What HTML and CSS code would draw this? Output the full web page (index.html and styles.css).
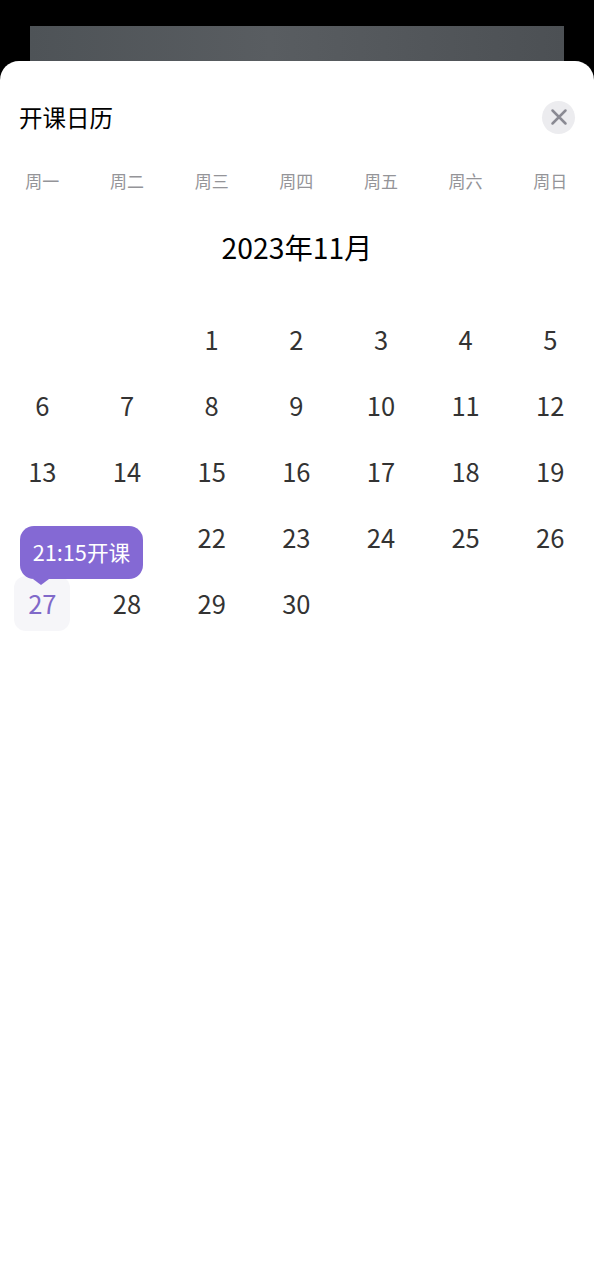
FILE: index.html
```html
<!DOCTYPE html>
<html lang="zh-CN">
<head>
<meta charset="utf-8">
<title>开课日历</title>
<link rel="stylesheet" href="styles.css">
</head>
<body>
<div class="backdrop"><div class="behind"></div></div>
<section class="sheet">
  <header class="head">
    <h1 class="title">开课日历</h1>
    <button class="close" aria-label="关闭">
      <svg viewBox="0 0 20 20" width="20" height="20"><path d="M3.5 3.5L16.5 16.5M16.5 3.5L3.5 16.5" fill="none" stroke="#8a8a93" stroke-width="2.5" stroke-linecap="round"/></svg>
    </button>
  </header>
  <div class="week">
    <span>周一</span><span>周二</span><span>周三</span><span>周四</span><span>周五</span><span>周六</span><span>周日</span>
  </div>
  <h2 class="month">2023年11月</h2>
  <div class="days">
    <span></span><span></span><span>1</span><span>2</span><span>3</span><span>4</span><span>5</span>
    <span>6</span><span>7</span><span>8</span><span>9</span><span>10</span><span>11</span><span>12</span>
    <span>13</span><span>14</span><span>15</span><span>16</span><span>17</span><span>18</span><span>19</span>
    <span></span><span></span><span>22</span><span>23</span><span>24</span><span>25</span><span>26</span>
    <span class="today"><i class="mark">27</i><b class="tip">21:15开课</b></span><span>28</span><span>29</span><span>30</span>
  </div>
</section>
</body>
</html>
```
FILE: styles.css
```css
* { box-sizing: border-box; }
html, body { margin: 0; height: 100%; }
body {
  background: #000;
  font-family: "Noto Sans CJK SC", "Noto Sans", sans-serif;
  display: flex;
  flex-direction: column;
  height: 1280px;
  overflow: hidden;
}
.backdrop { height: 61px; padding: 26px 30px 0; flex: none; }
.behind {
  height: 35px;
  background: linear-gradient(90deg, #4e5357, #595d61 45%, #4c5054);
}
.sheet {
  flex: 1;
  background: #fff;
  border-radius: 19px 19px 0 0;
}
.head {
  display: flex;
  justify-content: space-between;
  align-items: center;
  padding: 39px 19px 0 19px;
  height: 73px;
}
.title { margin: 0; font-size: 23.5px; font-weight: 400; color: #000; line-height: 34px; }
.close {
  width: 33px; height: 33px;
  border: 0; padding: 0;
  border-radius: 50%;
  background: #ececef;
  display: flex; align-items: center; justify-content: center;
}
.week, .days {
  display: grid;
  grid-template-columns: repeat(7, 84.67px);
  text-align: center;
}
.week {
  margin-top: 34px;
  font-size: 17px;
  line-height: 25px;
  color: #949498;
}
.month {
  margin: 34px 0 0;
  text-align: center;
  font-size: 28.3px;
  font-weight: 400;
  line-height: 40px;
  color: #000;
}
.days {
  margin-top: 38px;
  grid-auto-rows: 66px;
  font-size: 25.5px;
  font-weight: 400;
  color: #333;
}
.days span { display: flex; align-items: center; justify-content: center; }
.today { position: relative; }
.mark {
  font-style: normal;
  width: 56px; height: 55px;
  margin-top: 2px;
  padding-bottom: 2px;
  display: flex; align-items: center; justify-content: center;
  background: #f6f6f9;
  border-radius: 12px;
  color: #8069c9;
}
.tip {
  position: absolute;
  left: 20px; top: -43px;
  width: 123px; height: 53px;
  padding-bottom: 3px;
  display: flex; align-items: center; justify-content: center;
  background: #8469d4;
  border-radius: 14px;
  color: #fff;
  font-size: 21.7px;
  font-weight: 400;
  white-space: nowrap;
}
.tip::after {
  content: "";
  position: absolute;
  left: 13px; bottom: -6px;
  border-left: 8px solid transparent;
  border-right: 8px solid transparent;
  border-top: 6px solid #8469d4;
}
```
